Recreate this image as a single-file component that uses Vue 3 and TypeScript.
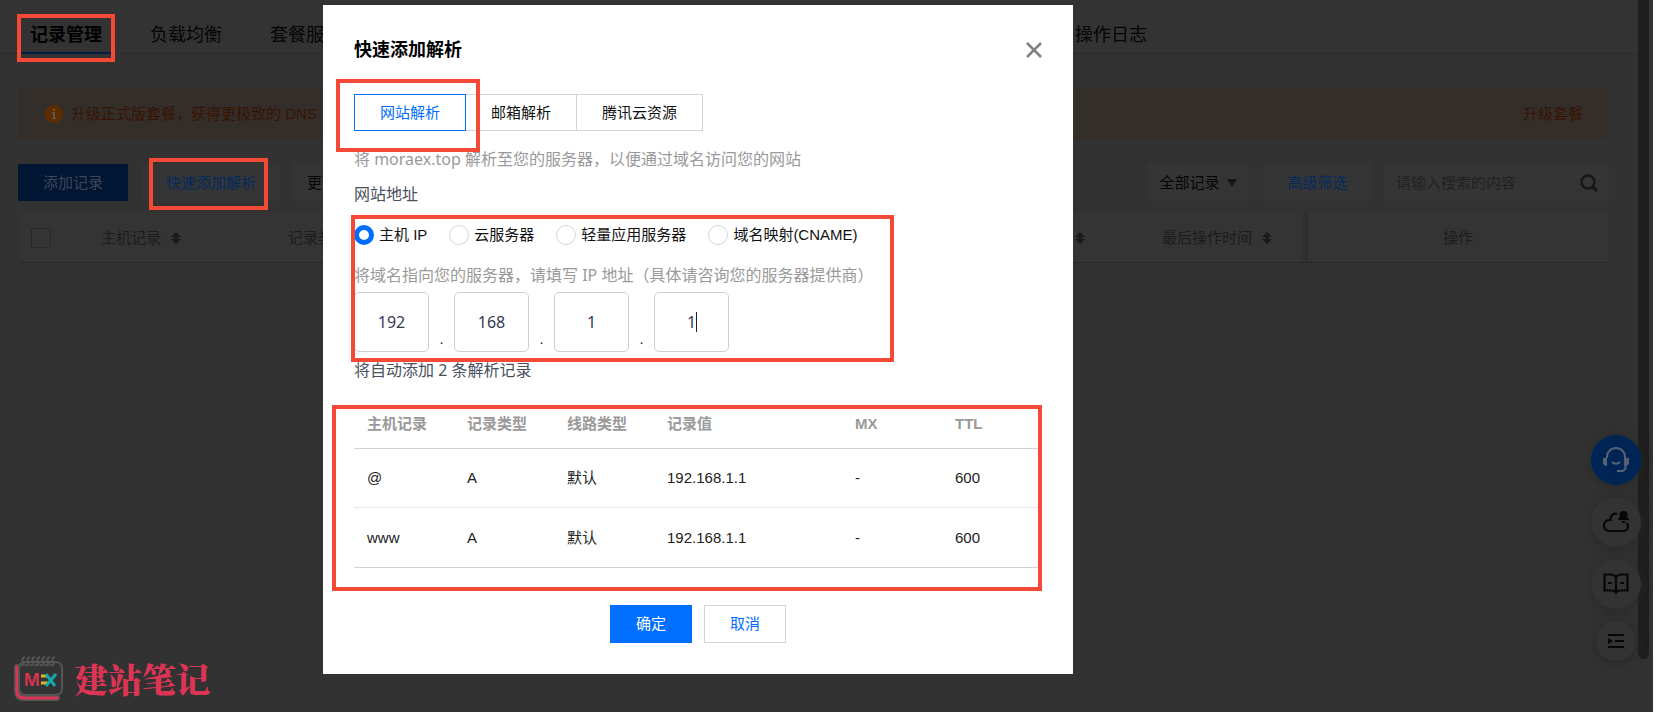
<script setup lang="ts">
import { ref } from 'vue'

interface DnsRecord {
  host: string
  type: string
  line: string
  value: string
  mx: string
  ttl: number
}

const kinds = ['网站解析', '邮箱解析', '腾讯云资源']
const activeKind = ref('网站解析')

const sources = ['主机 IP', '云服务器', '轻量应用服务器', '域名映射(CNAME)']
const source = ref('主机 IP')

const octets = ref(['192', '168', '1', '1'])

const heads = ['主机记录', '记录类型', '线路类型', '记录值', 'MX', 'TTL']
const records: DnsRecord[] = [
  { host: '@', type: 'A', line: '默认', value: '192.168.1.1', mx: '-', ttl: 600 },
  { host: 'www', type: 'A', line: '默认', value: '192.168.1.1', mx: '-', ttl: 600 },
]
</script>

<template>
  <div class="screen">
    <div class="page">
      <nav class="nav">
        <a href="#" class="nav-item current marked">记录管理</a>
        <a href="#" class="nav-item">负载均衡</a>
        <a href="#" class="nav-item">套餐服务</a>
        <a href="#" class="nav-item last">操作日志</a>
      </nav>

      <main class="main">
        <div class="banner">
          <svg class="info" viewBox="0 0 18 18" aria-hidden="true">
            <circle cx="9" cy="9" r="9" fill="#5f2c00" />
            <rect x="8" y="4" width="2" height="2" fill="#64584c" />
            <path d="M7 7h3v6h1v1H7v-1h1V8H7z" fill="#64584c" />
          </svg>
          <span>升级正式版套餐，获得更极致的 DNS</span>
          <a href="#" class="upgrade">升级套餐</a>
        </div>

        <div class="toolbar">
          <button type="button" class="tool add">添加记录</button>
          <button type="button" class="tool quick marked">快速添加解析</button>
          <button type="button" class="tool more">更多</button>
          <button type="button" class="tool filter">
            全部记录
            <svg width="10" height="8" viewBox="0 0 10 8" aria-hidden="true"><path d="M0 0h10L5 8z" fill="#171717" /></svg>
          </button>
          <button type="button" class="tool advanced">高级筛选</button>
          <label class="search">
            <input type="search" placeholder="请输入搜索的内容" aria-label="搜索" />
            <svg width="18" height="18" viewBox="0 0 18 18" fill="none" stroke="#161616" aria-hidden="true">
              <circle cx="8" cy="8" r="6.500" stroke-width="2.400" />
              <path d="M12.500 12.500 17 17" stroke-width="3" />
            </svg>
          </label>
        </div>

        <div class="grid">
          <div class="grid-head">
            <input type="checkbox" class="check" aria-label="全选" />
            <span class="col host">主机记录
              <svg class="sort" viewBox="0 0 10 14" aria-hidden="true"><path d="M5 1l5 5H6.500v2H10l-5 5-5-5h3.500V6H0z" /></svg>
            </span>
            <span class="col">记录类型</span>
            <span class="col right">
              <svg class="sort" viewBox="0 0 10 14" aria-hidden="true"><path d="M5 1l5 5H6.500v2H10l-5 5-5-5h3.500V6H0z" /></svg>
            </span>
            <span class="col time">最后操作时间
              <svg class="sort" viewBox="0 0 10 14" aria-hidden="true"><path d="M5 1l5 5H6.500v2H10l-5 5-5-5h3.500V6H0z" /></svg>
            </span>
            <span class="col action">操作</span>
          </div>
        </div>
      </main>
    </div>

    <div class="rail"><div class="thumb"></div></div>

    <aside class="floats">
      <button type="button" class="float blue" aria-label="客服">
        <svg width="26" height="26" viewBox="0 0 26 26" fill="none" stroke="#536176" stroke-width="2.200" aria-hidden="true">
          <path d="M4 11V9.500a9 8.500 0 0 1 18 0V18a4 4 0 0 1-4 6h-4" />
          <path d="M9 15a5 4 0 0 0 8 0" />
          <path d="M0 11h4v8H2.500L0 17zM22 11h4v6l-2.500 2H22z" fill="#536176" stroke="none" />
        </svg>
      </button>
      <button type="button" class="float" aria-label="消息">
        <svg width="26" height="22" viewBox="0 0 26 22" fill="none" stroke="#070707" stroke-width="2.200" aria-hidden="true">
          <path d="M14 3C11 2 7 4 7.500 9 3 9 1 11.500 1 14.500 1 18 3.500 20 6.500 20H20c3 0 5-2 5-4.500 0-1.500-.6-2.500-1.500-3.500" />
          <path d="M15 9V8l1.500-1.500V4a4 4 0 0 1 8 0v2.500L26 8v1zM18.500 10h4a2 2 0 0 1-4 0z" fill="#070707" stroke="none" />
        </svg>
      </button>
      <button type="button" class="float" aria-label="文档">
        <svg width="26" height="22" viewBox="0 0 26 22" fill="none" stroke="#070707" stroke-width="2.200" aria-hidden="true">
          <path d="M13 4C11.500 2 10 1.500 8 1.500H1.500v16H9c2 0 3 .5 4 2 1-1.500 2-2 4-2h7.500v-16H18c-2 0-3.500.5-5 2.500zM13 4v16M5 10h4M17 10h4" />
        </svg>
      </button>
      <button type="button" class="float small" aria-label="展开菜单">
        <svg width="18" height="16" viewBox="0 0 18 16" aria-hidden="true">
          <path d="M1 1h16v2H1zM8 7h9v2H8zM1 13h16v2H1zM1 5l5 3-5 3z" fill="#070707" />
        </svg>
      </button>
    </aside>

    <div class="brand">
      <svg width="52" height="46" viewBox="0 0 52 46" aria-hidden="true">
        <path d="M4 11v24q0 7 7 7h33" fill="none" stroke="#555" stroke-width="6" stroke-linecap="round" />
        <path d="M4 11v24q0 7 7 7h33" fill="none" stroke="#dc3554" stroke-width="3" stroke-linecap="round" />
        <rect x="6" y="6" width="43" height="33" rx="6" fill="#333" stroke="#555" stroke-width="2" />
        <path v-for="n in 7" :key="n" :transform="`translate(${n * 5 + 4} 0)`" d="M3 1q-4 1-2 5t-3 3" fill="none" stroke="#555" stroke-width="2" />
        <text x="11" y="30" fill="#dc3554" font-family="Inter" font-size="17" font-weight="600">M</text>
        <path d="M28 20h7M28 27h7" stroke="#e0b52d" stroke-width="3" />
        <path d="M33 18l9 12M43 18 33 30" stroke="#12a9ad" stroke-width="3" />
      </svg>
      <span>建站笔记</span>
    </div>

    <div class="mask">
      <section class="dialog" role="dialog" aria-labelledby="dialog-title">
        <header class="dialog-head">
          <h2 id="dialog-title">快速添加解析</h2>
          <button type="button" class="close" aria-label="关闭">
            <svg width="16" height="16" viewBox="0 0 16 16" aria-hidden="true"><path d="M1 1l14 14M15 1 1 15" stroke="#808080" stroke-width="2.500" /></svg>
          </button>
        </header>

        <div class="kinds">
          <button
            v-for="(kind, i) in kinds"
            :key="kind"
            type="button"
            class="kind"
            :class="{ active: kind === activeKind, marked: i === 0 }"
            @click="activeKind = kind"
          >{{ kind }}</button>
        </div>

        <p class="text hint intro">将 moraex.top 解析至您的服务器，以便通过域名访问您的网站</p>
        <p class="text address">网站地址</p>

        <div class="target marked">
          <div class="sources">
            <label v-for="item in sources" :key="item" class="source">
              <input v-model="source" type="radio" name="source" :value="item" />{{ item }}
            </label>
          </div>
          <p class="text hint">将域名指向您的服务器，请填写 IP 地址（具体请咨询您的服务器提供商）</p>
          <div class="octets">
            <template v-for="(_, i) in octets" :key="i">
              <span v-if="i" class="dot">.</span>
              <span class="octet">
                <input v-model="octets[i]" type="text" inputmode="numeric" :aria-label="`IP 第 ${i + 1} 段`" />
                <i v-if="i === 3" class="caret"></i>
              </span>
            </template>
          </div>
        </div>

        <p class="text summary">将自动添加 2 条解析记录</p>

        <div class="records marked">
          <table>
            <thead>
              <tr><th v-for="head in heads" :key="head" scope="col">{{ head }}</th></tr>
            </thead>
            <tbody>
              <tr v-for="row in records" :key="row.host">
                <td>{{ row.host }}</td>
                <td>{{ row.type }}</td>
                <td>{{ row.line }}</td>
                <td>{{ row.value }}</td>
                <td>{{ row.mx }}</td>
                <td>{{ row.ttl }}</td>
              </tr>
            </tbody>
          </table>
        </div>

        <footer class="actions">
          <button type="button" class="confirm">确定</button>
          <button type="button" class="cancel">取消</button>
        </footer>
      </section>
    </div>
  </div>
</template>

<style>
body {
  margin: 0;
  background: #fff;
}
</style>

<style scoped>
.screen {
  position: relative;
  min-height: 100vh;
  display: flex;
  overflow: hidden;
  padding-right: 5px;
  box-sizing: border-box;
  font: 15px/20px "Liberation Sans", "Noto Sans CJK SC", sans-serif;
}
.screen * {
  box-sizing: border-box;
}
button,
input {
  font: inherit;
  margin: 0;
}
button {
  border: 0;
  padding: 0;
  cursor: pointer;
}
a {
  text-decoration: none;
}
.marked {
  position: relative;
}
.marked::after {
  content: "";
  position: absolute;
  border: 4px solid #f34935;
  pointer-events: none;
  z-index: 2;
}

/* Dimmed page */
.page {
  flex: 1;
  min-width: 0;
  background: #323232;
}
.nav {
  display: flex;
  gap: 28px;
  height: 54px;
  padding-left: 20px;
  padding-top: 14px;
  background: #333;
  border-bottom: 1px solid #2d2d2d;
}
.nav-item {
  flex: none;
  height: 40px;
  padding: 0 10px;
  line-height: 42px;
  font-size: 18px;
  color: #050505;
}
.nav-item.current {
  font-weight: 700;
  color: #000;
  border-bottom: 2px solid #001d48;
}
.nav-item.current::after {
  inset: 0 -3px -10px -3px;
}
.nav-item.last {
  margin-left: 685px;
}
.main {
  padding: 34px 44px 0 18px;
}
.banner {
  display: flex;
  align-items: center;
  height: 51px;
  padding: 0 26px 0 27px;
  background: #342e2a;
  color: #381303;
}
.info {
  width: 18px;
  height: 18px;
  margin-right: 8px;
}
.upgrade {
  margin-left: auto;
  color: #381303;
}
.toolbar {
  display: flex;
  height: 37px;
  margin-top: 25px;
}
.tool {
  background: #353535;
  color: #050505;
}
.tool.add {
  width: 110px;
  background: #001633;
  color: #3d4857;
}
.tool.quick {
  width: 138px;
  margin-left: 14px;
  color: #032b5f;
}
.tool.quick::after {
  inset: -6px 12px -9px 7px;
}
.tool.more {
  width: 100px;
  margin-left: 13px;
  padding-left: 14px;
  text-align: left;
}
.tool.filter {
  display: flex;
  align-items: center;
  justify-content: center;
  gap: 7px;
  width: 102px;
  margin-left: auto;
}
.tool.advanced {
  width: 109px;
  margin: 0 12px 0 14px;
  color: #032b5f;
}
.search {
  display: flex;
  align-items: center;
  width: 225px;
  padding: 0 11px 0 12px;
  background: #353535;
}
.search input {
  flex: 1;
  min-width: 0;
  padding: 0;
  border: 0;
  outline: 0;
  background: none;
}
.search input::placeholder {
  color: #222;
  opacity: 1;
}
.grid {
  margin-top: 12px;
  height: calc(100vh - 213px);
  border: 1px solid #303030;
  border-width: 0 1px;
}
.grid-head {
  display: flex;
  align-items: stretch;
  height: 50px;
  background: #343434;
  border-bottom: 1px solid #292929;
  color: #1c1c1c;
}
.check {
  appearance: none;
  align-self: center;
  width: 20px;
  height: 20px;
  margin: 0 50px 0 12px;
  border: 1px solid #292929;
}
.col {
  display: flex;
  align-items: center;
  gap: 10px;
}
.col.host {
  width: 187px;
}
.col.right {
  margin-left: auto;
  width: 87px;
}
.col.time {
  width: 146px;
  background: linear-gradient(to left, #2c2c2c, transparent 8px);
}
.col.action {
  width: 300px;
  justify-content: center;
}
.sort {
  width: 10px;
  height: 14px;
  fill: #191919;
}
.rail {
  position: absolute;
  top: 0;
  right: 9px;
  width: 11px;
  height: 92.5%;
}
.thumb {
  height: 100%;
  background: #1e1e1e;
  border-radius: 0 0 6px 6px;
}
.floats {
  position: absolute;
  right: 17px;
  bottom: 51px;
  display: flex;
  flex-direction: column;
  align-items: center;
  gap: 12px;
}
.float {
  display: flex;
  align-items: center;
  justify-content: center;
  width: 50px;
  height: 50px;
  border-radius: 50%;
  background: #333;
  box-shadow: 0 2px 12px #26282b;
}
.float.blue {
  background: #002453;
}
.float.small {
  width: 40px;
  height: 40px;
}
.brand {
  position: absolute;
  left: 13px;
  bottom: 10px;
  display: flex;
  align-items: center;
  gap: 9px;
  color: #dc3554;
  font: 900 34px/46px "Noto Serif CJK SC", "Noto Sans CJK SC", serif;
}

/* Dialog */
.mask {
  position: absolute;
  inset: 0;
  display: flex;
  justify-content: center;
  align-items: flex-start;
  padding: 5px 262px 0 0;
  pointer-events: none;
}
.dialog {
  pointer-events: auto;
  width: 750px;
  padding: 33px 31px 31px;
  background: #fff;
  color: #222;
}
.dialog-head {
  display: flex;
  justify-content: space-between;
  align-items: center;
}
h2 {
  margin: 0;
  font-size: 18px;
  line-height: 24px;
  color: #000;
}
.close {
  display: flex;
  background: none;
}
.kinds {
  display: flex;
  margin-top: 32px;
}
.kind {
  height: 37px;
  padding: 0 25px;
  margin-left: -1px;
  border: 1px solid #cfd5de;
  background: #fff;
  color: #111;
}
.kind:first-child {
  margin-left: 0;
}
.kind.active {
  border-color: #006eff;
  color: #006eff;
  z-index: 1;
}
.kind.marked::after {
  inset: -16px -15px -22px -19px;
}
.text {
  margin: 0;
  font: 16px/24px "Noto Sans", "Noto Sans CJK SC", sans-serif;
  color: #495060;
}
.hint {
  color: #999;
}
.intro {
  margin-top: 16px;
}
.address {
  margin-top: 11px;
}
.target {
  margin-top: 19px;
}
.target::after {
  inset: -10px 148px -10px -3px;
}
.sources {
  display: flex;
  gap: 22px;
  margin-bottom: 18px;
}
.source {
  display: flex;
  align-items: center;
  gap: 5px;
  color: #111;
}
.source input {
  appearance: none;
  width: 20px;
  height: 20px;
  border: 1px solid #cfd5de;
  border-radius: 50%;
}
.source input:checked {
  border: 5px solid #006eff;
}
.octets {
  display: flex;
  align-items: flex-end;
  margin-top: 5px;
}
.octet {
  position: relative;
  width: 75px;
}
.octet input {
  width: 100%;
  height: 60px;
  padding: 0;
  border: 1px solid #cccfd8;
  border-radius: 5px;
  outline: 0;
  text-align: center;
  color: #363a55;
  font: 16px/24px "Noto Sans", sans-serif;
  display: block;
}
.caret {
  position: absolute;
  left: 56%;
  top: 20px;
  width: 1px;
  height: 20px;
  background: #222;
}
.dot {
  width: 25px;
  text-align: center;
  line-height: 26px;
}
.summary {
  margin-top: 6px;
}
.records {
  margin-top: 18px;
}
.records::after {
  inset: 5px 0 -23px -22px;
}
table {
  width: 100%;
  table-layout: fixed;
  border-collapse: separate;
  border-spacing: 0;
}
th,
td {
  padding: 0 0 0 13px;
  text-align: left;
  border-bottom: 1px solid #cfd2d8;
}
th {
  height: 49px;
  color: #999;
}
th:nth-child(4) {
  width: 188px;
}
td {
  height: 60px;
}
tbody tr:first-child td {
  height: 59px;
  border-color: #e7e8eb;
}
.actions {
  display: flex;
  justify-content: center;
  gap: 12px;
  margin-top: 37px;
}
.actions button {
  width: 82px;
  height: 38px;
}
.confirm {
  background: #006eff;
  color: #fff;
}
.actions .cancel {
  background: #fff;
  border: 1px solid #cfd5de;
  color: #006eff;
}
</style>
